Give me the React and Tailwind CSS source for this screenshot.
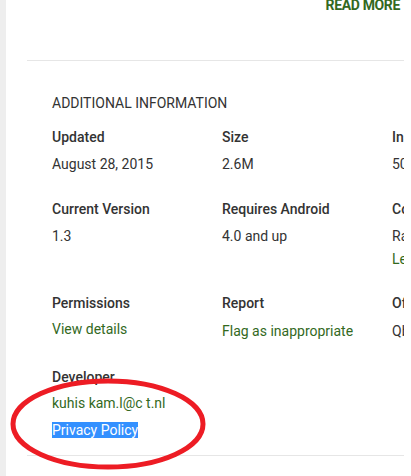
export default function App() {
  const label = "leading-5 text-[14px] font-medium text-[#333333] whitespace-nowrap";
  const value = "leading-[23px] text-[14px] text-[#333333] whitespace-nowrap";
  const link = "leading-[23px] text-[14px] text-[#33691e] whitespace-nowrap";
  return (
    <div className="relative w-[411px] h-[476px] overflow-hidden flex bg-white" style={{ fontFamily: "Roboto, 'Liberation Sans', sans-serif" }}>
      <div className="w-[6px] shrink-0 bg-[#eeeeee]" />
      <div className="flex-1 pl-[21px]">
        <div className="w-[377px]">
          <div className="mt-[-5px] h-[20px] leading-5 text-right pr-[4px] text-[14px] font-bold text-[#33691e] tracking-tight">READ MORE</div>
          <div className="mt-[45px] border-t border-[#e6e6e6]" />
          <div className="pl-[25px] overflow-hidden">
            <div className="mt-[32px] leading-5 text-[14px] text-[#333333] uppercase">Additional Information</div>
            <div className="mt-[14px] grid grid-cols-[170px_170px_170px]">
              <div>
                <div className={label}>Updated</div>
                <div className={"mt-[6px] " + value}>August 28, 2015</div>
              </div>
              <div>
                <div className={label}>Size</div>
                <div className={"mt-[6px] " + value}>2.6M</div>
              </div>
              <div>
                <div className={label}>Installs</div>
                <div className={"mt-[6px] " + value}>50 - 100</div>
              </div>
            </div>
            <div className="mt-[23px] grid grid-cols-[170px_170px_170px]">
              <div>
                <div className={label}>Current Version</div>
                <div className={"mt-[6px] " + value}>1.3</div>
              </div>
              <div>
                <div className={label}>Requires Android</div>
                <div className={"mt-[6px] " + value}>4.0 and up</div>
              </div>
              <div>
                <div className={label}>Content Rating</div>
                <div className={"mt-[6px] " + value}>Rated for 3+</div>
                <div className={link}>Learn more</div>
              </div>
            </div>
            <div className="mt-[22px] grid grid-cols-[170px_170px_170px]">
              <div>
                <div className={label}>Permissions</div>
                <div className={"mt-[5px] " + link}>View details</div>
              </div>
              <div>
                <div className={label}>Report</div>
                <div className={"mt-[7px] " + link}>Flag as inappropriate</div>
              </div>
              <div>
                <div className={label}>Offered By</div>
                <div className={"mt-[7px] " + value}>Qbit Apps</div>
              </div>
            </div>
            <div className="mt-[24px]">
              <div className={label}>Developer</div>
              <div className={"mt-[5px] " + link}>kuhis kam.l@c t.nl</div>
              <div className={"mt-[4px] " + link}>
                <span className="bg-[#3390ff] text-white">Privacy Policy</span>
              </div>
            </div>
          </div>
          <div className="mt-[13px] border-t border-[#e6e6e6]" />
        </div>
      </div>
      <svg className="absolute left-0 top-0 pointer-events-none" width="411" height="476">
        <ellipse cx="108" cy="424" rx="95" ry="43" fill="none" stroke="#ed1c24" strokeWidth="5" />
      </svg>
    </div>
  );
}
